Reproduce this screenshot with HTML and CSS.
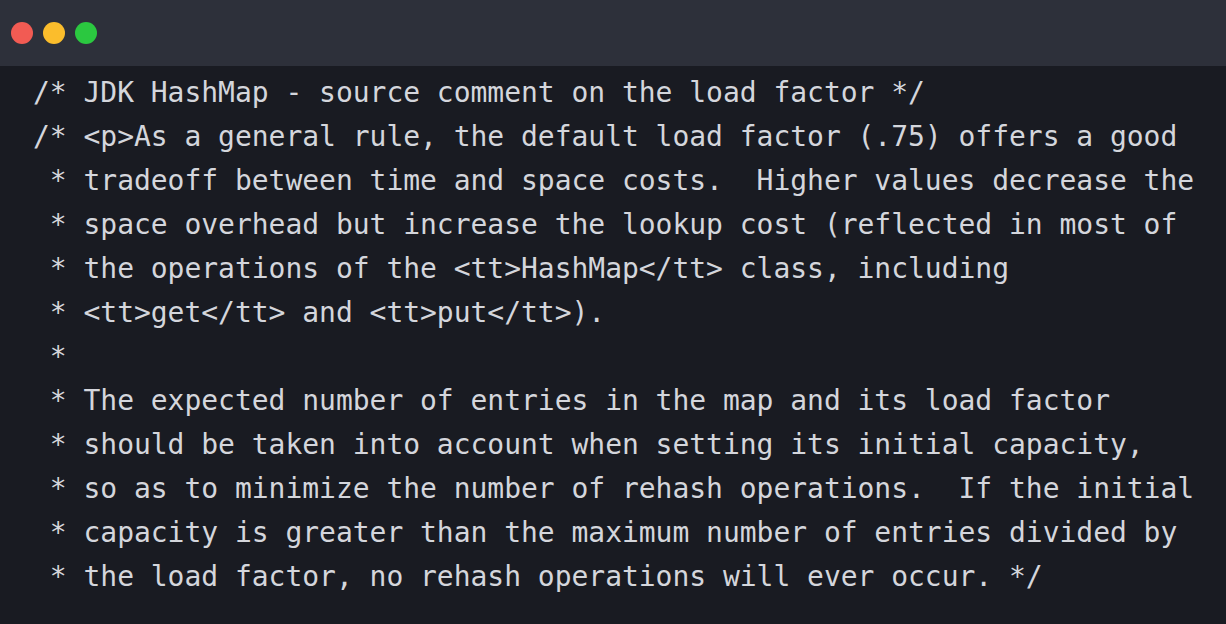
FILE: index.html
```html
<!DOCTYPE html>
<html>
<head>
<meta charset="utf-8">
<link rel="stylesheet" href="styles.css">
</head>
<body>
<div class="window">
  <div class="titlebar">
    <span class="dot red"></span>
    <span class="dot yellow"></span>
    <span class="dot green"></span>
  </div>
  <pre class="code">/* JDK HashMap - source comment on the load factor */
/* &lt;p&gt;As a general rule, the default load factor (.75) offers a good
 * tradeoff between time and space costs.  Higher values decrease the
 * space overhead but increase the lookup cost (reflected in most of
 * the operations of the &lt;tt&gt;HashMap&lt;/tt&gt; class, including
 * &lt;tt&gt;get&lt;/tt&gt; and &lt;tt&gt;put&lt;/tt&gt;).
 *
 * The expected number of entries in the map and its load factor
 * should be taken into account when setting its initial capacity,
 * so as to minimize the number of rehash operations.  If the initial
 * capacity is greater than the maximum number of entries divided by
 * the load factor, no rehash operations will ever occur. */</pre>
</div>
</body>
</html>
```
FILE: styles.css
```css
html, body {
  margin: 0;
  padding: 0;
  background: #191b22;
}
.window {
  width: 1226px;
  height: 624px;
  display: flex;
  flex-direction: column;
  background: #191b22;
  overflow: hidden;
}
.titlebar {
  height: 66px;
  flex: none;
  background: #2d303a;
  display: flex;
  align-items: center;
  gap: 10px;
  padding-left: 11px;
}
.dot {
  width: 22px;
  height: 22px;
  border-radius: 50%;
  display: block;
}
.red { background: #f25b53; }
.yellow { background: #fbbd2c; }
.green { background: #2bc840; }
.code {
  margin: 0;
  padding: 5px 0 0 33px;
  font-family: "DejaVu Sans Mono", monospace;
  font-size: 28px;
  letter-spacing: -0.03px;
  line-height: 44px;
  color: #d4d6dc;
  white-space: pre;
}
```
